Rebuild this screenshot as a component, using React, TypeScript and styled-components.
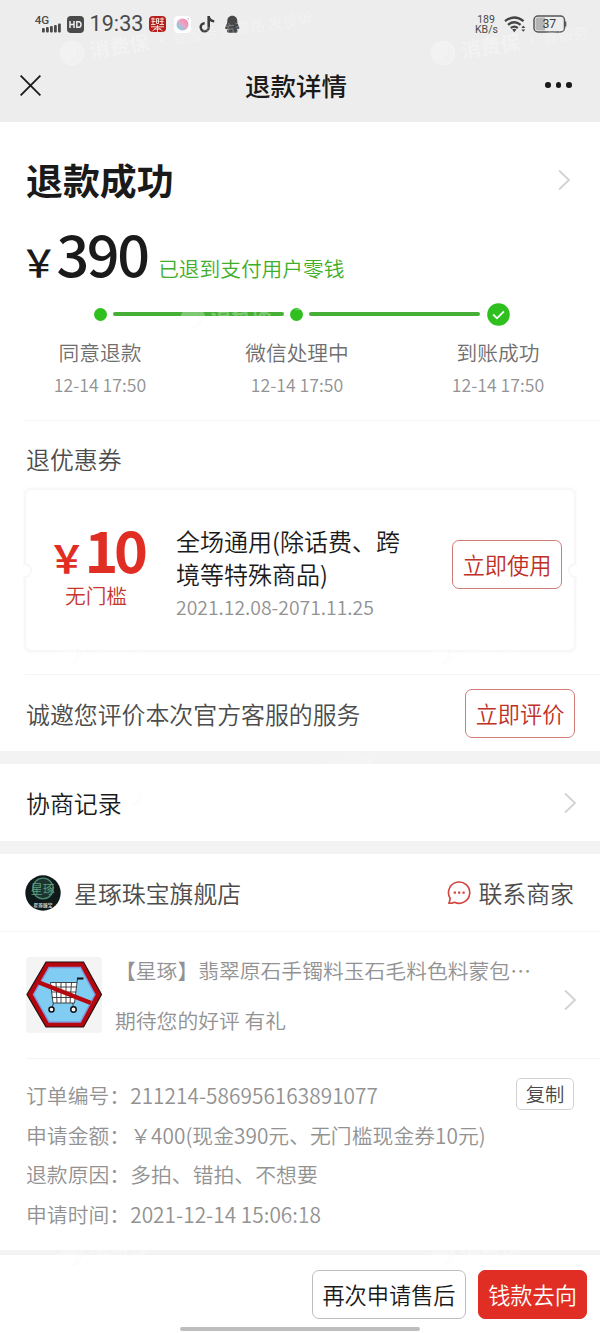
import React from 'react';
import styled, { createGlobalStyle } from 'styled-components';

const GlobalStyle = createGlobalStyle`
  * { box-sizing: border-box; }
  body { margin: 0; background: #fff; }
`;

const Page = styled.div`
  position: relative;
  width: 600px;
  height: 1333px;
  overflow: hidden;
  display: flex;
  flex-direction: column;
  background: #fff;
  color: #1a1a1a;
  font-family: 'Noto Sans CJK SC', 'Noto Sans', sans-serif;
  font-weight: 350;
  white-space: nowrap;
`;

const Header = styled.header`
  height: 122px;
  background: #ededed;
  flex: none;
`;

const StatusBar = styled.div`
  height: 48px;
  padding: 0 33px 0 35px;
  display: flex;
  align-items: center;
  justify-content: space-between;
`;

const StatusGroup = styled.div<{ $gap: number }>`
  display: flex;
  align-items: center;
  gap: ${(p) => p.$gap}px;
`;

const Clock = styled.span`
  font: 400 21.5px/24px Roboto, sans-serif;
  letter-spacing: 0.1px;
  color: #4a4a4a;
  width: 55px;
  padding-left: 0.5px;
`;

const Speed = styled.div`
  width: 22px;
  font: 400 10.5px/10px Roboto, sans-serif;
  color: #4a4a4a;
  text-align: center;
  padding-top: 1px;
`;

const NavBar = styled.div`
  height: 74px;
  padding: 0 28px 0 20px;
  display: grid;
  grid-template-columns: 60px 1fr 60px;
  align-items: center;
`;

const NavTitle = styled.h1`
  margin: 0;
  font-size: 25.5px;
  line-height: 36px;
  font-weight: 500;
  text-align: center;
`;

const MoreDots = styled.div`
  display: flex;
  justify-content: flex-end;
  gap: 5px;
`;

const MoreDot = styled.span`
  width: 5.6px;
  height: 5.6px;
  border-radius: 50%;
  background: #1a1a1a;
`;

const Summary = styled.section`
  height: 298px;
  flex: none;
`;

const HeadlineRow = styled.div`
  display: flex;
  align-items: center;
  justify-content: space-between;
  height: 112px;
  padding: 3px 29px 0 26px;
`;

const Headline = styled.h2`
  margin: -2px 0 0;
  font-size: 36.9px;
  line-height: 50px;
  font-weight: 700;
`;

const AmountRow = styled.div`
  display: flex;
  align-items: baseline;
  height: 68px;
  padding-left: 26px;
  margin-top: -10px;
  margin-bottom: 10px;
  line-height: 56px;
`;

const Money = styled.div<{ $red?: boolean }>`
  color: ${(p) => (p.$red ? '#e02e24' : '#1a1a1a')};
  font-weight: ${(p) => (p.$red ? 700 : 500)};
  font-size: 57.5px;
  letter-spacing: ${(p) => (p.$red ? -4.5 : -2.4)}px;
  line-height: 56px;
  display: flex;
  align-items: baseline;
`;

const Yen = styled.span`
  font-size: 37.5px;
  width: 36.5px;
  margin-left: -6px;
  letter-spacing: 0;
`;

const RefundedTo = styled.span`
  margin-left: 10.5px;
  font-size: 20.7px;
  color: #3fae2a;
`;

const Track = styled.div`
  display: flex;
  align-items: center;
  height: 24px;
  margin-top: 2px;
  padding-left: 93.5px;
`;

const TrackDot = styled.span`
  width: 13px;
  height: 13px;
  border-radius: 50%;
  background: #2fbf1f;
`;

const TrackLine = styled.span`
  width: 171px;
  height: 4px;
  margin: 0 6.3px;
  border-radius: 2px;
  background: #45b035;
`;

const Steps = styled.div`
  display: grid;
  grid-template-columns: 197px 201px 140px;
  padding-left: 30px;
`;

const Step = styled.div`
  width: 140px;
  text-align: center;
`;

const StepName = styled.div`
  margin-top: 11px;
  font-size: 20.7px;
  line-height: 30px;
  color: #6f6f6f;
`;

const StepTime = styled.div`
  margin-top: 3px;
  font-size: 17.7px;
  line-height: 28px;
  color: #929292;
`;

const Inset = styled.section<{ $h: number }>`
  height: ${(p) => p.$h}px;
  flex: none;
  margin-left: 25px;
  border-top: 1px solid #f4f4f4;
`;

const SectionLabel = styled.div`
  height: 68px;
  padding-left: 1px;
  line-height: 76px;
  font-size: 23.9px;
  color: #4c4c4c;
`;

const Coupon = styled.div`
  position: relative;
  display: flex;
  align-items: center;
  width: 548px;
  height: 160px;
  margin-left: 1px;
  margin-top: 1px;
  border-radius: 5px;
  background: #fff;
  box-shadow: 0 0 3px 1.5px rgba(0, 0, 0, 0.045);
`;

const Notch = styled.span<{ $side: 'left' | 'right' }>`
  position: absolute;
  top: 73px;
  ${(p) => p.$side}: -9px;
  width: 15px;
  height: 15px;
  border-radius: 50%;
  background: #fff;
  border: 2px solid #f7f7f7;
  clip-path: ${(p) => (p.$side === 'left' ? 'inset(0 0 0 6px)' : 'inset(0 6px 0 0)')};
`;

const CouponValue = styled.div`
  width: 150px;
  padding-left: 28px;
  padding-bottom: 13px;
`;

const CouponRule = styled.div`
  width: 84px;
  margin-top: -3px;
  font-size: 20.7px;
  line-height: 26px;
  text-align: center;
  color: #c8372c;
`;

const CouponText = styled.div`
  width: 276px;
  padding-top: 7px;
  font-size: 24px;
  line-height: 33px;
`;

const CouponDate = styled.div`
  font-size: 19.4px;
  line-height: 34px;
  color: #929292;
`;

const Button = styled.button<{ $w: number; $kind: 'red' | 'gray' | 'solid'; $lift?: number }>`
  width: ${(p) => p.$w}px;
  height: 49px;
  margin-bottom: ${(p) => p.$lift ?? 0}px;
  padding: 0 0 1px;
  flex: none;
  border: 1px solid
    ${(p) => (p.$kind === 'red' ? '#d07c76' : p.$kind === 'gray' ? '#bdbdbd' : '#e02e24')};
  border-radius: 7px;
  background: ${(p) => (p.$kind === 'solid' ? '#e02e24' : '#fff')};
  color: ${(p) => (p.$kind === 'red' ? '#bf3026' : p.$kind === 'gray' ? '#1a1a1a' : '#fff')};
  font-family: inherit;
  font-weight: inherit;
  font-size: 22.2px;
  line-height: 46px;
  text-align: center;
`;

const Row = styled.div<{ $h: number; $pl?: number; $pr?: number }>`
  display: flex;
  align-items: center;
  justify-content: space-between;
  flex: none;
  height: ${(p) => p.$h}px;
  padding-left: ${(p) => p.$pl ?? 26}px;
  padding-right: ${(p) => p.$pr ?? 25}px;
`;

const RowText = styled.span<{ $dark?: boolean }>`
  font-size: 23.9px;
  line-height: 34px;
  color: ${(p) => (p.$dark ? '#1a1a1a' : '#4c4c4c')};
`;

const Band = styled.div<{ $h: number }>`
  height: ${(p) => p.$h}px;
  flex: none;
  background: #f3f3f3;
`;

const ShopGroup = styled.div<{ $gap: number }>`
  display: flex;
  align-items: center;
  gap: ${(p) => p.$gap}px;
`;

const Product = styled.section`
  display: flex;
  height: 127px;
  flex: none;
  border-top: 1px solid #f4f4f4;
  padding: 25px 23px 0 26px;
`;

const ProductText = styled.div`
  flex: 1;
  margin-left: 13px;
  margin-top: -2px;
  font-size: 20.8px;
  color: #929292;
`;

const ProductName = styled.div`
  line-height: 30px;
`;

const ProductNote = styled.div`
  margin-top: 20px;
  line-height: 30px;
`;

const ProductArrow = styled.div`
  padding-top: 32px;
`;

const Order = styled.section`
  height: 192px;
  flex: none;
  margin-left: 26px;
  padding-top: 16px;
  border-top: 1px solid #f4f4f4;
`;

const OrderLine = styled.div`
  display: flex;
  align-items: center;
  justify-content: space-between;
  height: 39.8px;
  padding-right: 26px;
  font-size: 20.8px;
  letter-spacing: 0.04px;
  color: #929292;
`;

const CopyButton = styled.button`
  width: 58px;
  height: 32px;
  margin-top: -1px;
  padding: 0;
  border: 1px solid #d2d2d2;
  border-radius: 5px;
  background: #fff;
  font-family: inherit;
  font-weight: inherit;
  font-size: 19.3px;
  line-height: 29px;
  color: #484848;
`;

const Footer = styled.footer`
  flex: 1;
  display: flex;
  flex-direction: column;
  align-items: center;
`;

const FooterActions = styled.div`
  align-self: stretch;
  display: flex;
  justify-content: flex-end;
  gap: 12px;
  padding: 15px 13px 0 0;
  height: 72px;
`;

const HomeBar = styled.div`
  width: 240px;
  height: 4px;
  border-radius: 2px;
  background: #bdbdbd;
`;

const Watermark = styled.div<{ $x: number; $y: number }>`
  position: absolute;
  left: ${(p) => p.$x}px;
  top: ${(p) => p.$y}px;
  display: flex;
  align-items: center;
  gap: 5px;
  transform: rotate(-8.5deg);
  transform-origin: 13px 13px;
  color: #fff;
  opacity: 0.3;
  pointer-events: none;
  font-size: 15px;
  line-height: 26px;
`;

const WatermarkBrand = styled.b`
  font-size: 20px;
`;

const Chevron = () => (
  <svg width="14" height="22" viewBox="0 0 14 22" fill="none" stroke="#d2d2d2" strokeWidth="1.8">
    <path d="M2 1.5 12 11 2 20.5" />
  </svg>
);

const Signal = () => (
  <svg width="27" height="20" viewBox="0 0 27 20" fill="#4a4a4a">
    <text x="-0.3" y="9.7" fontSize="11.6" fontWeight="500" fontFamily="Roboto, sans-serif">4G</text>
    <rect x="7" y="14" width="2.8" height="4.5" rx="1" />
    <rect x="11" y="13" width="2.8" height="5.5" rx="1" />
    <rect x="15" y="12" width="2.8" height="6.5" rx="1" />
    <rect x="19" y="11" width="2.8" height="7.5" rx="1" />
    <rect x="23" y="9.5" width="2.8" height="9" rx="1" />
  </svg>
);

const HdBadge = () => (
  <svg width="17" height="17" viewBox="0 0 17 17">
    <rect width="17" height="17" rx="4" fill="#4a4a4a" />
    <path d="M3 5v7M7 5v7M3 8.5h4M9.8 5.7v5.6h2q2.2 0 2.2-2.8t-2.2-2.8z" fill="none" stroke="#ededed" strokeWidth="1.5" />
  </svg>
);

const AppIcons = () => (
  <svg width="92" height="20" viewBox="150 14 92 20">
    <rect x="150" y="16" width="17" height="16" rx="4" fill="#b5201f" />
    <g fill="none" stroke="#f6d9cf" strokeWidth="1">
      <path d="M152 19h4.500M154 17.500v7M152.500 21.500h4M152 24.500h4.500M160.500 19h4.500M163 17.500v7M160.500 21.500h4M160.500 24.500h4.500" />
      <path d="M157.500 18.500h2v5h-2zM157.500 21h2M152 26.800h13M158.500 25v7M157.500 27.500l-4 3.500M159.500 27.500l4 3.500M155 29h7" />
    </g>
    <defs>
      <linearGradient id="camera" x1="0" y1="1" x2="1" y2="0">
        <stop offset="0.15" stopColor="#7fd3df" />
        <stop offset="0.55" stopColor="#eba3c4" />
        <stop offset="1" stopColor="#f57fa4" />
      </linearGradient>
    </defs>
    <rect x="175" y="16" width="17" height="17" rx="4.5" fill="#fff" />
    <circle cx="183.5" cy="24.6" r="6" fill="url(#camera)" />
    <circle cx="189.2" cy="18.8" r="0.8" fill="#d9a6c0" />
    <path d="M209.700 16v11.200a4 4 0 1 1-4-4M209.700 17q1 4 5.500 4.300" fill="none" stroke="#3c3c3c" strokeWidth="2.6" />
    <g fill="#474747">
      <path d="M233.300 15.800c3.300 0 5 2.500 5 5.400v6.300c0 2.800-2 4.500-5 4.500s-5-1.700-5-4.500v-6.300c0-2.900 1.700-5.400 5-5.400z" />
      <path d="M229 21.500l-2.500 5q-.8 2.800.6 2.800l3-1.300zM237.600 21.500l2.500 5q.8 2.800-.6 2.800l-3-1.300z" />
      <rect x="228" y="29.500" width="10.600" height="3.200" rx="1.4" />
    </g>
  </svg>
);

const Wifi = () => (
  <svg width="22" height="17" viewBox="0 0 22 17" fill="none" stroke="#444" strokeWidth="2.3">
    <path d="M1 5.200q9.300-7.400 18.600 0M4 8.800q6.300-5 12.600 0M6.800 12q3.500-2.700 7 0" />
    <path d="M8.200 13.600q2.100-1.500 4.200 0l-2.100 2.600z" fill="#444" stroke="none" />
    <path d="M17.300 12l2-2.400 2 2.400zM17.300 13.400l2 2.400 2-2.400z" fill="#444" stroke="none" />
  </svg>
);

const Battery = () => (
  <svg width="34" height="18" viewBox="0 0 34 18">
    <rect x="1" y="1" width="30.5" height="16" rx="4" fill="#ededed" stroke="#555" strokeWidth="1.5" />
    <path d="M5 2.500h7v13H5q-2.500 0-2.500-2.500V5q0-2.500 2.500-2.500z" fill="#b3b3b3" />
    <path d="M32.500 6.500v5" stroke="#555" strokeWidth="1.6" />
    <text x="16.3" y="13.3" fontSize="12.3" fontWeight="400" textAnchor="middle" fill="#3d3d3d" fontFamily="Roboto, sans-serif">37</text>
  </svg>
);

const CloseIcon = () => (
  <svg width="21" height="21" viewBox="0 0 21 21" stroke="#1a1a1a" strokeWidth="1.8">
    <path d="M.6.6 20.400 20.400M20.400.6.6 20.400" />
  </svg>
);

const DoneIcon = () => (
  <svg width="23" height="23" viewBox="0 0 23 23">
    <circle cx="11.5" cy="11.5" r="11.3" fill="#2fbf1f" />
    <path d="M6.200 11.500l3.800 3.800 6.900-7" fill="none" stroke="#fff" strokeWidth="1.8" />
  </svg>
);

const ShopLogo = () => (
  <svg width="36" height="36" viewBox="0 0 36 36">
    <circle cx="18" cy="18" r="17.7" fill="#10191a" />
    <circle cx="18" cy="13.5" r="10.3" fill="#1c3330" stroke="#4b8a70" strokeWidth="1.2" />
    <text x="17.8" y="18.5" fontSize="12" textAnchor="middle" fill="#5fa282">星琢</text>
    <text x="18" y="31.5" fontSize="4.7" fontWeight="700" textAnchor="middle" fill="#c2cbc7">星琢臻宝</text>
  </svg>
);

const ChatIcon = () => (
  <svg width="24" height="24" viewBox="0 0 24 24" fill="none" stroke="#d0453c" strokeWidth="1.6">
    <path d="M3.200 17.400A10.600 10.600 0 1 1 7.500 21.200Q5 22.400 1.800 22.300Q2.900 20 3.200 17.400z" strokeLinejoin="round" />
    <path d="M6.700 11.600h2.200M11.100 11.600h2.200M15.500 11.600h2.200" strokeWidth="2.2" />
  </svg>
);

const ProductImage = () => (
  <svg width="76" height="76" viewBox="0 0 76 76" fill="none">
    <rect width="76" height="76" rx="4" fill="#f4f4f4" />
    <path d="M20 5h37.500L75.500 37.500 57.500 70H20L1 37.500z" fill="#b5070d" stroke="#241012" strokeWidth="1.2" />
    <path d="M23 10.500h31.500L69 37.500 54.500 65H23L7.500 37.500z" fill="#80ccf3" stroke="#8296dc" strokeWidth="1.4" />
    <path d="M24.500 25.500H51L48.500 46H27z" fill="#fff" />
    <path
      d="M57 21.500h-5.500L48.500 46H27l-2.500-20.500H51M25 30h25.500M25.500 35h24.500M26 40.500h23.500M30 25.500l1 20.500M35 25.500V46M40 25.500V46M45.500 25.500L44 46M27.500 46l-1.500 5M47 46v4"
      stroke="#333"
      strokeWidth="0.9"
    />
    <path d="M51 21.500h6.500" stroke="#111" strokeWidth="2" />
    <circle cx="25.5" cy="52.5" r="2.5" fill="#fff" stroke="#111" strokeWidth="1.5" />
    <circle cx="47.5" cy="52.5" r="2.7" fill="#fff" stroke="#111" strokeWidth="1.5" />
    <path d="M13 25.500l52 20.500" stroke="#b5070d" strokeWidth="4.5" />
  </svg>
);

const steps = ['同意退款', '微信处理中', '到账成功'];

const marks = [
  { x: 59, y: 40, note: '· 查服务 防套路 发投诉' },
  { x: 430, y: 40, note: '· 查服务' },
  { x: 59, y: 642, note: '· 查服务 防套路 发投诉' },
  { x: 430, y: 642, note: '· 查服务' },
  { x: 180, y: 306, note: '· 查服务 防套路 发投诉' },
  { x: 59, y: 1244, note: '· 查服务 防套路 发投诉' },
  { x: 430, y: 1244, note: '· 查服务' },
  { x: 120, y: 784, note: '· 查服务 防套路 发投诉' },
];

export default function App() {
  return (
    <Page>
      <GlobalStyle />
      <Header>
        <StatusBar>
          <StatusGroup $gap={5}>
            <Signal />
            <HdBadge />
            <Clock>19:33</Clock>
            <AppIcons />
          </StatusGroup>
          <StatusGroup $gap={7}>
            <Speed>189<br />KB/s</Speed>
            <Wifi />
            <Battery />
          </StatusGroup>
        </StatusBar>
        <NavBar>
          <CloseIcon />
          <NavTitle>退款详情</NavTitle>
          <MoreDots><MoreDot /><MoreDot /><MoreDot /></MoreDots>
        </NavBar>
      </Header>

      <Summary>
        <HeadlineRow>
          <Headline>退款成功</Headline>
          <Chevron />
        </HeadlineRow>
        <AmountRow>
          <Money><Yen>￥</Yen>390</Money>
          <RefundedTo>已退到支付用户零钱</RefundedTo>
        </AmountRow>
        <Track>
          <TrackDot /><TrackLine /><TrackDot /><TrackLine /><DoneIcon />
        </Track>
        <Steps>
          {steps.map((name) => (
            <Step key={name}>
              <StepName>{name}</StepName>
              <StepTime>12-14 17:50</StepTime>
            </Step>
          ))}
        </Steps>
      </Summary>

      <Inset $h={254}>
        <SectionLabel>退优惠券</SectionLabel>
        <Coupon>
          <Notch $side="left" />
          <Notch $side="right" />
          <CouponValue>
            <Money $red><Yen>￥</Yen>10</Money>
            <CouponRule>无门槛</CouponRule>
          </CouponValue>
          <CouponText>
            全场通用(除话费、跨<br />境等特殊商品)
            <CouponDate>2021.12.08-2071.11.25</CouponDate>
          </CouponText>
          <Button $w={110} $kind="red" $lift={12}>立即使用</Button>
        </Coupon>
      </Inset>
      <Inset $h={77}>
        <Row $h={77} $pl={1}>
          <RowText>诚邀您评价本次官方客服的服务</RowText>
          <Button $w={110} $kind="red">立即评价</Button>
        </Row>
      </Inset>

      <Band $h={13} />
      <Row $h={77} $pr={23}>
        <RowText $dark>协商记录</RowText>
        <Chevron />
      </Row>
      <Band $h={13} />
      <Row $h={77} $pl={25} $pr={26}>
        <ShopGroup $gap={13}>
          <ShopLogo />
          <RowText>星琢珠宝旗舰店</RowText>
        </ShopGroup>
        <ShopGroup $gap={7}>
          <ChatIcon />
          <RowText>联系商家</RowText>
        </ShopGroup>
      </Row>

      <Product>
        <ProductImage />
        <ProductText>
          <ProductName>【星琢】翡翠原石手镯料玉石毛料色料蒙包⋯</ProductName>
          <ProductNote>期待您的好评 有礼</ProductNote>
        </ProductText>
        <ProductArrow><Chevron /></ProductArrow>
      </Product>

      <Order>
        <OrderLine>
          <span>订单编号：211214-586956163891077</span>
          <CopyButton>复制</CopyButton>
        </OrderLine>
        <OrderLine>申请金额：￥400(现金390元、无门槛现金券10元)</OrderLine>
        <OrderLine>退款原因：多拍、错拍、不想要</OrderLine>
        <OrderLine>申请时间：2021-12-14 15:06:18</OrderLine>
      </Order>

      <Band $h={5} />
      <Footer>
        <FooterActions>
          <Button $w={154} $kind="gray">再次申请售后</Button>
          <Button $w={109} $kind="solid">钱款去向</Button>
        </FooterActions>
        <HomeBar />
      </Footer>

      {marks.map(({ x, y, note }) => (
        <Watermark key={`${x}-${y}`} $x={x} $y={y}>
          <svg width="26" height="26" viewBox="0 0 26 26">
            <circle cx="13" cy="13" r="12.5" fill="#fff" />
            <path d="M10 22q10-3 10-16M15 22q7-4 7-11" fill="none" stroke="#f3f3f3" strokeWidth="1" />
          </svg>
          <WatermarkBrand>消费保</WatermarkBrand>
          <span>{note}</span>
        </Watermark>
      ))}
    </Page>
  );
}
